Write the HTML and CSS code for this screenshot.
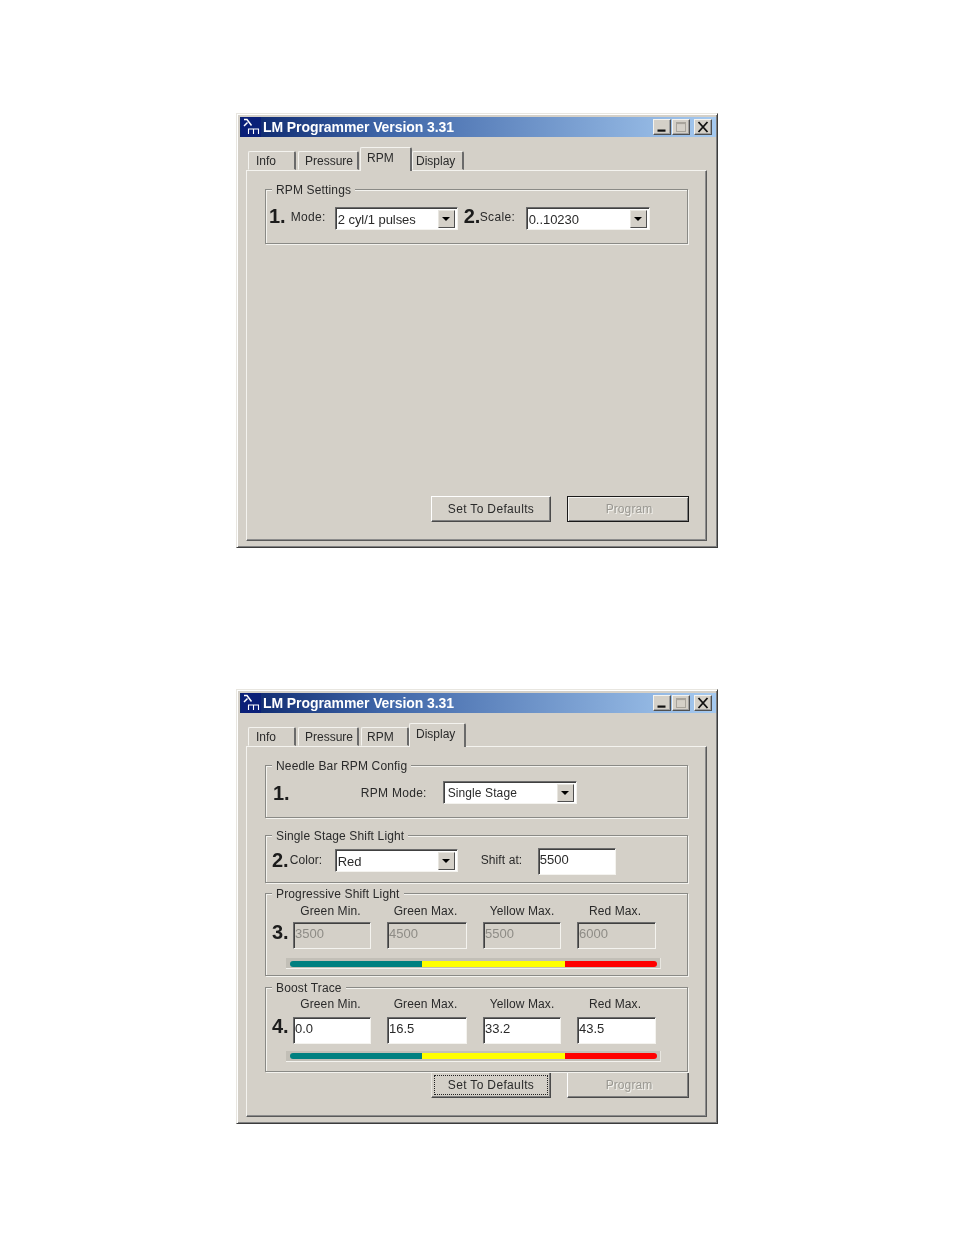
FILE: index.html
```html
<!DOCTYPE html>
<html lang="en">
<head>
<meta charset="utf-8">
<title>LM Programmer</title>
<link rel="stylesheet" href="styles.css">
</head>
<body>
<main class="page">

<section class="window">
  <header class="titlebar">
    <svg class="app-icon" viewBox="0 0 20 20"><rect width="20" height="20" fill="#0a1f78"/><path d="M3 2.500h3l4.500 6M6.500 5.500L3 9" fill="none" stroke="#fff" stroke-width="1.500"/><path d="M7.500 17v-5h10v5M12.500 12v5" fill="none" stroke="#fff" stroke-width="1.100"/></svg>
    <span class="title">LM Programmer Version 3.31</span>
    <div class="caption-buttons">
      <span class="cap"><svg viewBox="0 0 16 14"><rect x="3.500" y="9.500" width="8" height="2.200" fill="#111"/></svg></span>
      <span class="cap"><svg viewBox="0 0 16 14"><rect x="3.500" y="2.500" width="9" height="9" fill="none" stroke="#a8a49c"/><rect x="3.500" y="2.500" width="9" height="1.600" fill="#a8a49c"/></svg></span>
      <span class="cap cap-close"><svg viewBox="0 0 16 14"><path d="M3.500 2l9 10M12.500 2l-9 10" stroke="#111" stroke-width="1.800"/></svg></span>
    </div>
  </header>
  <div class="client">
    <nav class="tabs">
      <span class="tab tab-info">Info</span>
      <span class="tab tab-pressure">Pressure</span>
      <span class="tab tab-rpm tab-active">RPM</span>
      <span class="tab tab-display">Display</span>
    </nav>
    <div class="panel">
      <div class="group group-settings">
        <span class="legend">RPM Settings</span>
        <div class="row row-settings">
          <span class="num">1.</span>
          <span class="lbl lbl-mode">Mode:</span>
          <div class="combo combo-mode"><span class="combo-text">2 cyl/1 pulses</span><span class="combo-btn"><i class="arrow"></i></span></div>
          <span class="num num-two">2.</span>
          <span class="lbl lbl-scale">Scale:</span>
          <div class="combo combo-scale"><span class="combo-text">0..10230</span><span class="combo-btn"><i class="arrow"></i></span></div>
        </div>
      </div>
      <div class="actions">
        <button class="btn btn-set">Set To Defaults</button>
        <button class="btn btn-program btn-default">Program</button>
      </div>
    </div>
  </div>
</section>

<section class="window window-second">
  <header class="titlebar">
    <svg class="app-icon" viewBox="0 0 20 20"><rect width="20" height="20" fill="#0a1f78"/><path d="M3 2.500h3l4.500 6M6.500 5.500L3 9" fill="none" stroke="#fff" stroke-width="1.500"/><path d="M7.500 17v-5h10v5M12.500 12v5" fill="none" stroke="#fff" stroke-width="1.100"/></svg>
    <span class="title">LM Programmer Version 3.31</span>
    <div class="caption-buttons">
      <span class="cap"><svg viewBox="0 0 16 14"><rect x="3.500" y="9.500" width="8" height="2.200" fill="#111"/></svg></span>
      <span class="cap"><svg viewBox="0 0 16 14"><rect x="3.500" y="2.500" width="9" height="9" fill="none" stroke="#a8a49c"/><rect x="3.500" y="2.500" width="9" height="1.600" fill="#a8a49c"/></svg></span>
      <span class="cap cap-close"><svg viewBox="0 0 16 14"><path d="M3.500 2l9 10M12.500 2l-9 10" stroke="#111" stroke-width="1.800"/></svg></span>
    </div>
  </header>
  <div class="client">
    <nav class="tabs">
      <span class="tab tab-info">Info</span>
      <span class="tab tab-pressure">Pressure</span>
      <span class="tab tab-rpm2">RPM</span>
      <span class="tab tab-display2 tab-active">Display</span>
    </nav>
    <div class="panel">
      <div class="group group-needle">
        <span class="legend">Needle Bar RPM Config</span>
        <div class="row row-needle">
          <span class="num">1.</span>
          <span class="lbl lbl-rpmmode">RPM Mode:</span>
          <div class="combo combo-stage"><span class="combo-text">Single Stage</span><span class="combo-btn"><i class="arrow"></i></span></div>
        </div>
      </div>
      <div class="group group-single">
        <span class="legend">Single Stage Shift Light</span>
        <div class="row row-single">
          <span class="num">2.</span>
          <span class="lbl lbl-color">Color:</span>
          <div class="combo combo-mode"><span class="combo-text">Red</span><span class="combo-btn"><i class="arrow"></i></span></div>
          <span class="lbl lbl-shift">Shift at:</span>
          <span class="field field-shift">5500</span>
        </div>
      </div>
      <div class="group group-prog">
        <span class="legend">Progressive Shift Light</span>
        <div class="fields">
          <span></span>
          <span class="cap-label">Green Min.</span>
          <span class="cap-label">Green Max.</span>
          <span class="cap-label cap-yellow">Yellow Max.</span>
          <span class="cap-label">Red Max.</span>
          <span class="num num-field">3.</span>
          <span class="field field-off">3500</span>
          <span class="field field-off">4500</span>
          <span class="field field-off">5500</span>
          <span class="field field-off">6000</span>
        </div>
        <div class="track"><div class="bar"><i class="seg seg-teal"></i><i class="seg seg-yellow"></i><i class="seg seg-red"></i></div></div>
      </div>
      <div class="group group-boost">
        <span class="legend">Boost Trace</span>
        <div class="fields fields-boost">
          <span></span>
          <span class="cap-label">Green Min.</span>
          <span class="cap-label">Green Max.</span>
          <span class="cap-label cap-yellow">Yellow Max.</span>
          <span class="cap-label">Red Max.</span>
          <span class="num num-field">4.</span>
          <span class="field">0.0</span>
          <span class="field">16.5</span>
          <span class="field">33.2</span>
          <span class="field">43.5</span>
        </div>
        <div class="track track-boost"><div class="bar"><i class="seg seg-teal"></i><i class="seg seg-yellow"></i><i class="seg seg-red"></i></div></div>
      </div>
      <div class="actions actions-tight">
        <button class="btn btn-set btn-focus"><span class="focus-ring">Set To Defaults</span></button>
        <button class="btn btn-program">Program</button>
      </div>
    </div>
  </div>
</section>

</main>
</body>
</html>
```

FILE: styles.css
```css
* { box-sizing: border-box; }
html, body { margin: 0; background: #fff; }
body { font-family: "Liberation Sans", Arial, sans-serif; font-size: 12px; color: #2a2a2a; }
.page { height: 1235px; padding: 113px 0 0 236px; overflow: hidden; }

.window {
  width: 482px; height: 435px; background: #d4d0c8; display: flex; flex-direction: column;
  border: 1px solid; border-color: #e8e6e0 #3c3c3c #3c3c3c #e8e6e0;
  box-shadow: inset 1px 1px 0 #fff, inset -1px -1px 0 #808080;
  padding: 3px 1px 0 3px; filter: blur(.4px);
}
.window-second { margin-top: 141px; }

.titlebar {
  height: 20px; flex: none; display: flex; align-items: center;
  background: linear-gradient(90deg, #0a246a 0%, #3f66a8 30%, #a6caf0 100%);
}
.app-icon { width: 20px; height: 20px; flex: none; margin-left: 1px; }
.title { margin-left: 2px; color: #fff; font-weight: 700; font-size: 14px; letter-spacing: -.08px; white-space: nowrap; }
.caption-buttons { margin-left: auto; margin-right: 4px; display: flex; gap: 1px; }
.cap {
  width: 18px; height: 16px; background: #d4d0c8; display: block;
  border: 1px solid; border-color: #f4f3ef #505050 #505050 #f4f3ef;
  box-shadow: inset -1px -1px 0 #a0a0a0;
}
.cap svg { display: block; width: 16px; height: 14px; }
.cap-close { margin-left: 3px; }

.client { flex: 1; display: flex; flex-direction: column; padding: 10px 9px 6px 6px; }
.tabs { height: 23px; display: flex; align-items: flex-end; padding-left: 2px; position: relative; z-index: 1; flex: none; }
.tab {
  height: 19px; padding-top: 1px; line-height: 17px; flex: none;
  border: 1px solid #d4d0c8; border-top-color: #f4f3ef; border-left-color: #f4f3ef;
  border-right: 2px solid #6a6a6a; border-radius: 2px 2px 0 0;
}
.tab-info { width: 48px; margin-right: 2px; padding-left: 7px; }
.tab-pressure { width: 61px; margin-right: 1px; padding-left: 6px; }
.tab-rpm { width: 52px; padding-left: 6px; }
.tab-display { width: 52px; padding-left: 3px; }
.tab-rpm2 { width: 48px; margin-left: 1px; padding-left: 5px; }
.tab-display2 { width: 57px; padding-left: 6px; }
.tab-active {
  height: 24px; margin-bottom: -1px; padding-top: 1px; line-height: 19px; background: #d4d0c8;
  border-bottom: 0;
}

.panel {
  flex: 1; width: 461px; display: flex; flex-direction: column; padding: 18px 17px 18px 18px;
  border: 1px solid; border-color: #f4f3ef #5a5a5a #5a5a5a #f4f3ef;
  box-shadow: inset -1px -1px 0 #8c8c8c;
}

.group {
  position: relative; width: 423px; flex: none;
  border: 1px solid #8a8a86; box-shadow: 1px 1px 0 #f4f3ef, inset 1px 1px 0 #f4f3ef;
}
.legend { position: absolute; top: -8px; left: 6px; padding: 0 4px; line-height: 16px; background: #d4d0c8; white-space: nowrap; letter-spacing: .15px; }
.group-settings { height: 55px; }
.group-needle { height: 53px; }
.group-single { height: 48px; margin-top: 17px; }
.group-prog { height: 83px; margin-top: 10px; padding: 9px 0 0 6px; }
.group-boost { height: 85px; margin-top: 11px; padding: 8px 0 0 6px; }

.row { display: flex; align-items: center; }
.row-settings { padding: 17px 0 0 3px; }
.row-settings .num { margin-top: -6px; }
.row-settings .lbl { margin-top: -4px; }
.row-needle { padding: 14px 0 0 7px; }
.row-needle .num, .row-needle .lbl { margin-top: 2px; }
.row-single { padding: 12px 0 0 6px; align-items: flex-start; }
.row-single .num { margin-top: 1px; }
.row-single .lbl { margin-top: 5px; }
.row-single .combo { margin-top: 1px; }
.num { font-size: 20px; font-weight: 700; line-height: 22px; color: #1c1c1c; white-space: nowrap; }
.lbl { white-space: nowrap; letter-spacing: .1px; }
.lbl-mode { margin-left: 5px; width: 44px; letter-spacing: .35px; }
.num-two { margin-left: 6px; width: 16px; }
.lbl-scale { width: 46px; letter-spacing: .35px; }
.row-settings .lbl-mode, .row-settings .lbl-scale { flex: none; }
.row-needle .lbl-rpmmode { margin-left: 71px; width: 82px; letter-spacing: .3px; }
.row-single .lbl-color { margin-left: 1px; width: 45px; }
.row-single .lbl-shift { margin-left: 23px; width: 57px; }

.combo {
  height: 23px; display: flex; align-items: stretch; background: #fff; flex: none;
  border: 1px solid; border-color: #6c6c6c #f4f3ef #f4f3ef #6c6c6c;
  box-shadow: inset 1px 1px 0 #404040;
  padding: 2px 2px 1px 2px;
}
.combo-mode { width: 123px; }
.combo-scale { width: 124px; }
.combo-stage { width: 134px; }
.combo-text { flex: 1; line-height: 19px; font-size: 13px; letter-spacing: -.05px; }
.combo-stage .combo-text { padding-left: 2px; font-size: 12px; letter-spacing: .1px; }
.combo-btn {
  width: 17px; background: #d4d0c8; display: flex; align-items: center; justify-content: center;
  border: 1px solid; border-color: #e8e6e0 #505050 #505050 #e8e6e0;
}
.arrow { display: block; width: 0; height: 0; border: 4px solid transparent; border-top: 4px solid #000; border-bottom: 0; }

.field {
  display: block; height: 27px; background: #fff; line-height: 20px; padding: 1px 0 0 1px;
  border: 1px solid; border-color: #6c6c6c #f4f3ef #f4f3ef #6c6c6c;
  box-shadow: inset 1px 1px 0 #404040; font-size: 13px;
}
.field-shift { width: 78px; flex: none; }
.field-off { background: #d4d0c8; color: #8e8c86; }
.fields { display: grid; grid-template-columns: 5px 78px 80px 78px 79px; column-gap: 16px; row-gap: 3px; }
.fields-boost { row-gap: 5px; }
.cap-label { line-height: 16px; text-align: center; white-space: nowrap; letter-spacing: .1px; padding-right: 3px; }
.cap-yellow { padding-right: 0; }
.num-field { margin-top: -1px; }
.fields-boost .num-field { margin-top: -2px; }

.track { margin: 9px 0 0 14px; width: 375px; height: 11px; padding: 3px 3px 0 4px; background: #c2bfb7; border-bottom: 1px solid #f4f3ef; border-right: 1px solid #e8e6e0; }
.track-boost { margin-top: 7px; padding-top: 2px; }
.bar { display: flex; height: 6px; }
.seg { display: block; height: 6px; flex: none; }
.seg-teal { width: 132px; background: #008080; border-radius: 3px 0 0 3px; }
.seg-yellow { width: 143px; background: #ff0; }
.seg-red { width: 92px; background: #f00; border-radius: 0 3px 3px 0; }

.actions { margin-top: auto; display: flex; justify-content: flex-end; gap: 16px; }
.actions-tight { margin-top: 0; }
.btn {
  font: inherit; color: #2a2a2a; letter-spacing: .35px; height: 26px; padding: 0; background: #d4d0c8;
  border: 1px solid; border-color: #fff #4a4a4a #4a4a4a #fff; box-shadow: inset -1px -1px 0 #808080;
}
.btn-set { width: 120px; }
.btn-program { width: 122px; padding-left: 2px; color: #9a9892; text-shadow: 1px 1px 0 #f4f3ef; letter-spacing: .1px; }
.btn-default { border: 1px solid #1a1a1a; box-shadow: inset 1px 1px 0 #f4f3ef, inset -1px -1px 0 #808080; }
.btn-focus { border-color: #e8e6e0 #4a4a4a #4a4a4a #e8e6e0; padding: 2px; }
.focus-ring { display: flex; align-items: center; justify-content: center; height: 100%; border: 1px dotted #222; }
```
